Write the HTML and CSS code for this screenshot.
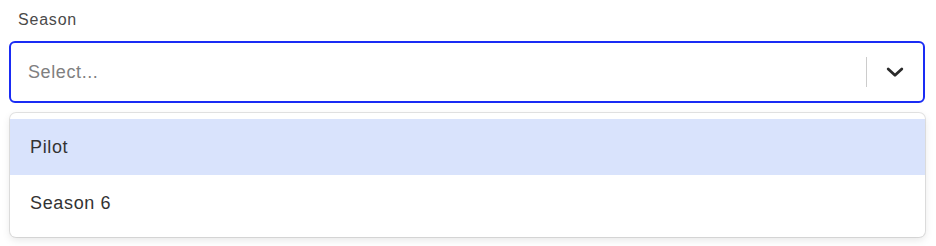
FILE: index.html
```html
<!DOCTYPE html>
<html lang="en">
<head>
    <meta charset="UTF-8">
    <meta name="viewport" content="width=device-width, initial-scale=1.0">
    <title>Season select</title>
    <link rel="stylesheet" href="styles.css">
</head>
<body>
    <div class="form">
        <div class="field">
            <label class="field-label">Season</label>
            <div class="select">
                <div class="select-control">
                    <div class="select-value">Select...</div>
                    <div class="select-indicators">
                        <span class="select-separator"></span>
                        <span class="select-arrow">
                            <svg width="20" height="20" viewBox="0 0 20 20" aria-hidden="true">
                                <path d="M3.2 7 L10 13.2 L16.8 7" fill="none" stroke="#2b2b2b" stroke-width="2.8" stroke-linecap="round" stroke-linejoin="round"/>
                            </svg>
                        </span>
                    </div>
                </div>
                <div class="select-menu">
                    <div class="select-option focused">Pilot</div>
                    <div class="select-option">Season 6</div>
                </div>
            </div>
        </div>

        <div class="field">
            <label class="field-label">Episode</label>
        </div>
    </div>
</body>
</html>
```

FILE: styles.css
```css
* {
    margin: 0;
    padding: 0;
    box-sizing: border-box;
}

body {
    font-family: "Liberation Sans", Arial, sans-serif;
    color: #333;
    background: #fff;
}

.form {
    display: flex;
    flex-direction: column;
    gap: 112px;
    padding: 9px 11px 0 9px;
}

.field-label {
    display: block;
    padding-left: 9px;
    font-size: 16px;
    letter-spacing: 0.8px;
    line-height: 22px;
    color: #4a4a4a;
    margin-bottom: 10px;
}

.select {
    position: relative;
}

.select-control {
    display: flex;
    align-items: center;
    height: 62px;
    border: 2.5px solid #1a2cf4;
    border-radius: 6px;
    background: #fff;
}

.select-value {
    flex: 1;
    padding-left: 17px;
    font-size: 18px;
    letter-spacing: 0.6px;
    color: #808080;
}

.select-indicators {
    display: flex;
    align-items: center;
    align-self: stretch;
}

.select-separator {
    width: 1px;
    height: 30px;
    background: #ccc;
}

.select-arrow {
    display: flex;
    align-items: center;
    justify-content: center;
    width: 56px;
    height: 100%;
}

/* menu floats over the fields below */
.select-menu {
    position: absolute;
    top: 72px;
    left: 1px;
    right: 0;
    padding: 6px 0;
    background: #fff;
    border-radius: 6px;
    box-shadow: 0 0 0 1px rgba(0, 0, 0, 0.1), 0 3px 8px rgba(0, 0, 0, 0.1);
    z-index: 2;
}

.select-option {
    height: 56px;
    display: flex;
    align-items: center;
    padding-left: 20px;
    font-size: 18px;
    letter-spacing: 0.65px;
    color: #333;
}

.select-option.focused {
    background: #d9e3fc;
}
```
